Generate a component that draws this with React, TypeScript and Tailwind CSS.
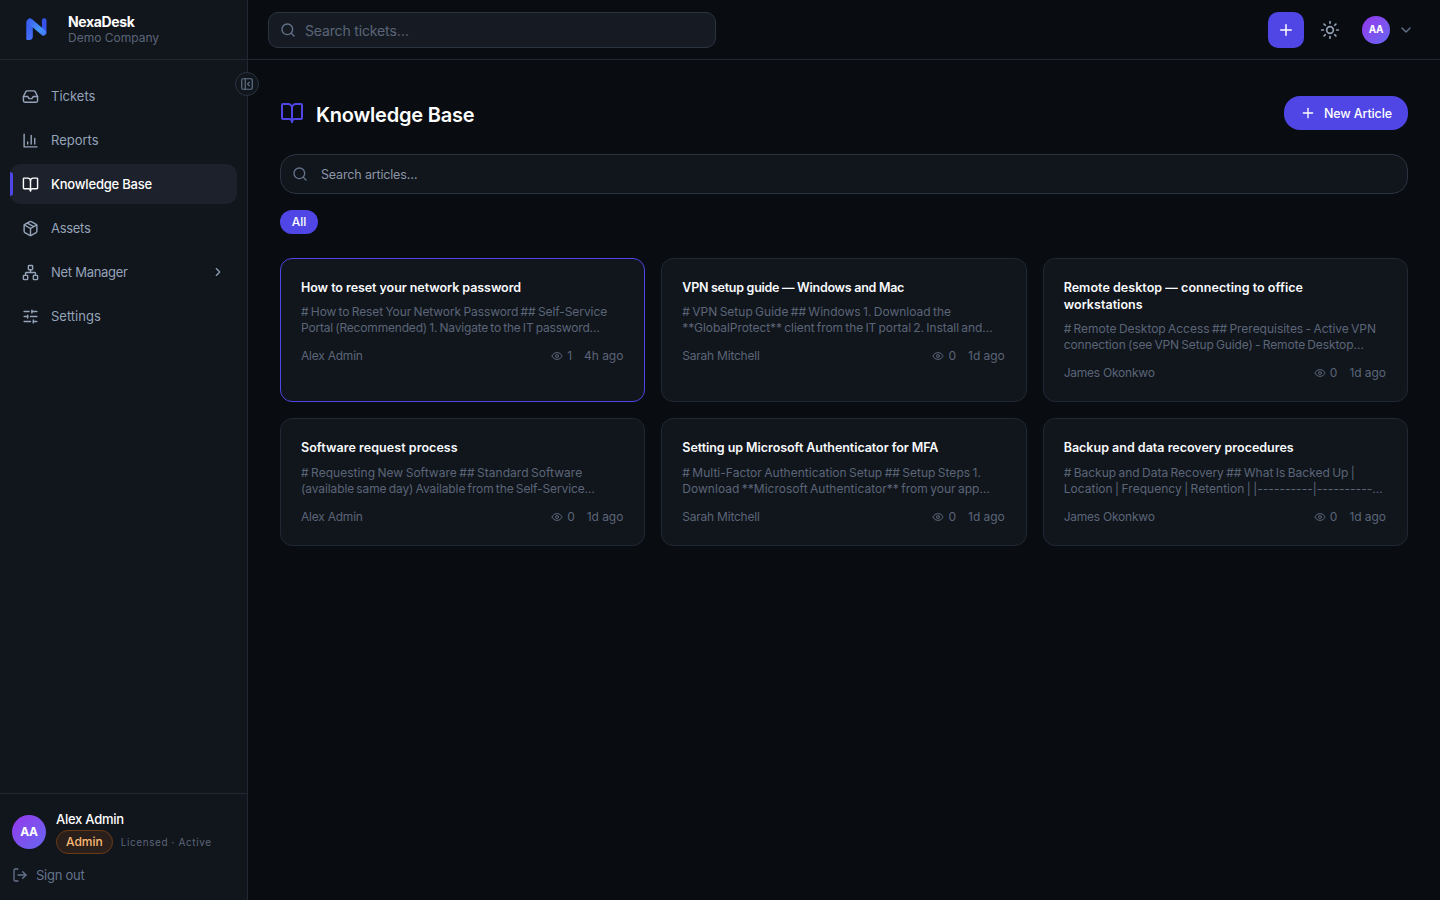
import { BookOpen, ChevronDown, ChevronRight, Eye, Inbox, LogOut, Network, Package, PanelLeftClose, Plus, Search, SlidersHorizontal, Sun } from 'lucide-react';
import type { ReactNode } from 'react';

function ReportsIcon() {
  return (
    <svg width="17" height="17" viewBox="0 0 24 24" fill="none" stroke="currentColor" strokeWidth="2" strokeLinecap="round" strokeLinejoin="round">
      <path d="M3 3v18h18" />
      <path d="M8 17v-3" />
      <path d="M13 17V5" />
      <path d="M18 17V9" />
    </svg>
  );
}

function Logo() {
  return (
    <svg width="22" height="24" viewBox="0 0 22 24" fill="none">
      <defs>
        <linearGradient id="stem" x1="0" y1="0" x2="0" y2="22" gradientUnits="userSpaceOnUse">
          <stop stopColor="#3457ea" />
          <stop offset="1" stopColor="#4470fb" />
        </linearGradient>
        <linearGradient id="slash" x1="2" y1="2" x2="18" y2="17" gradientUnits="userSpaceOnUse">
          <stop stopColor="#3a5cf0" />
          <stop offset="0.65" stopColor="#4596fb" />
          <stop offset="1" stopColor="#3f7df8" />
        </linearGradient>
      </defs>
      <path d="M18.2 2.5v12" stroke="#3553ea" strokeWidth="4.6" strokeLinecap="round" />
      <path d="M0.3 3.6A3.4 3.4 0 0 1 6.8 3.4V18.6A3.4 3.4 0 0 1 3.4 22H1.3A1 1 0 0 1 .3 21z" fill="url(#stem)" />
      <path d="M4 3.3L17.3 14.6" stroke="url(#slash)" strokeWidth="5.8" strokeLinecap="round" />
    </svg>
  );
}

function NavItem({ icon, label, tracking, active, chevron }: { icon: ReactNode; label: string; tracking: string; active?: boolean; chevron?: boolean }) {
  return (
    <a className={`relative flex h-10 items-center gap-3 rounded-[10px] px-3 text-[13px] ${active ? 'bg-[#1c212b] font-medium text-white' : 'text-[#94a3b8]'}`}>
      {active && <span className="absolute left-0 top-2 h-6 w-[3px] rounded-r-sm bg-[#4f46e5]" />}
      {icon}
      <span className={`pt-[2px] ${tracking}`}>{label}</span>
      {chevron && <ChevronRight size={14} className="ml-auto" />}
    </a>
  );
}

type Article = { title: ReactNode; lines: [string, string]; tracks: [string, string]; titleTrack: string; author: string; views: number; age: string; selected?: boolean };

const firstRow: Article[] = [
  { title: 'How to reset your network password', titleTrack: 'tracking-[-0.06px]', lines: ['# How to Reset Your Network Password ## Self-Service', 'Portal (Recommended) 1. Navigate to the IT password…'], tracks: ['tracking-[-0.08px]', 'tracking-[-0.18px]'], author: 'Alex Admin', views: 1, age: '4h ago', selected: true },
  { title: 'VPN setup guide — Windows and Mac', titleTrack: 'tracking-[-0.28px]', lines: ['# VPN Setup Guide ## Windows 1. Download the', '**GlobalProtect** client from the IT portal 2. Install and…'], tracks: ['', 'tracking-[-0.07px]'], author: 'Sarah Mitchell', views: 0, age: '1d ago' },
  { title: <>Remote desktop — connecting to office<br />workstations</>, titleTrack: 'tracking-[0.04px]', lines: ['# Remote Desktop Access ## Prerequisites - Active VPN', 'connection (see VPN Setup Guide) - Remote Desktop…'], tracks: ['tracking-[-0.02px]', 'tracking-[-0.12px]'], author: 'James Okonkwo', views: 0, age: '1d ago' },
];

const secondRow: Article[] = [
  { title: 'Software request process', titleTrack: 'tracking-[0.05px]', lines: ['# Requesting New Software ## Standard Software', '(available same day) Available from the Self-Service…'], tracks: ['tracking-[0.04px]', 'tracking-[-0.11px]'], author: 'Alex Admin', views: 0, age: '1d ago' },
  { title: 'Setting up Microsoft Authenticator for MFA', titleTrack: 'tracking-[-0.06px]', lines: ['# Multi-Factor Authentication Setup ## Setup Steps 1.', 'Download **Microsoft Authenticator** from your app…'], tracks: ['tracking-[0.02px]', 'tracking-[0.02px]'], author: 'Sarah Mitchell', views: 0, age: '1d ago' },
  { title: 'Backup and data recovery procedures', titleTrack: '', lines: ['# Backup and Data Recovery ## What Is Backed Up |', 'Location | Frequency | Retention | |----------|----------…'], tracks: ['', 'tracking-[0.03px]'], author: 'James Okonkwo', views: 0, age: '1d ago' },
];

function ArticleCard({ a, bodyGap }: { a: Article; bodyGap: string }) {
  return (
    <article className={`rounded-xl border bg-[#11151c] p-5 ${a.selected ? 'border-[#4f46e5]' : 'border-[#202834]'}`}>
      <h3 className={`whitespace-nowrap text-[12.5px] font-semibold leading-[17px] text-[#f8fafc] ${a.titleTrack}`}>{a.title}</h3>
      <p className={`whitespace-nowrap text-[12px] leading-4 text-[#5b6578] [word-spacing:-1px] ${bodyGap}`}>
        <span className={`block ${a.tracks[0]}`}>{a.lines[0]}</span>
        <span className={`block ${a.tracks[1]}`}>{a.lines[1]}</span>
      </p>
      <div className="mt-3 flex items-center justify-between text-[12px] leading-4 text-[#5b6578]">
        <span className="tracking-[-0.23px]">{a.author}</span>
        <span className="flex items-center gap-3 pr-px">
          <span className="flex items-center gap-1"><Eye size={12} />{a.views}</span>
          <span className="tracking-[-0.05px]">{a.age}</span>
        </span>
      </div>
    </article>
  );
}

export default function App() {
  return (
    <div className="flex h-[900px] w-[1440px] overflow-hidden bg-[#090c11] font-['Inter',sans-serif] text-white">
      <aside className="relative flex w-[248px] shrink-0 flex-col border-r border-[#202834] bg-[#11151c]">
        <div className="flex h-[60px] shrink-0 items-center border-b border-[#202834] pl-[26px]">
          <Logo />
          <div className="ml-5">
            <div className="text-[14px] font-bold leading-4 tracking-[-0.35px]">NexaDesk</div>
            <div className="text-[12px] leading-4 text-[#5b6578]">Demo Company</div>
          </div>
        </div>
        <button className="absolute -right-3 top-[72px] z-10 flex size-6 items-center justify-center rounded-full border border-[#2a3441] bg-[#11151c] text-[#64748b]">
          <PanelLeftClose size={14} />
        </button>
        <nav className="flex flex-1 flex-col gap-1 px-[10px] pt-4">
          <NavItem icon={<Inbox size={17} />} label="Tickets" tracking="" />
          <NavItem icon={<ReportsIcon />} label="Reports" tracking="" />
          <NavItem icon={<BookOpen size={17} />} label="Knowledge Base" tracking="tracking-[-0.2px]" active />
          <NavItem icon={<Package size={17} />} label="Assets" tracking="tracking-[-0.3px]" />
          <NavItem icon={<Network size={17} />} label="Net Manager" tracking="tracking-[-0.28px]" chevron />
          <NavItem icon={<SlidersHorizontal size={17} />} label="Settings" tracking="" />
        </nav>
        <div className="h-[107px] shrink-0 border-t border-[#202834] px-3 pt-4">
          <div className="flex items-center gap-[10px]">
            <div className="flex size-[34px] items-center justify-center rounded-full bg-linear-to-br from-[#9333ea] to-[#6366f1] text-[12px] font-bold tracking-[-0.4px]">AA</div>
            <div>
              <div className="mb-[2px] text-[13px] font-medium leading-[18px] tracking-[-0.25px]">Alex Admin</div>
              <div className="flex items-center gap-2">
                <span className="flex h-6 items-center rounded-full border border-[#6b3a17] bg-[#2a1f1b] px-[9px] text-[12px] font-medium text-[#fdba74]">Admin</span>
                <span className="text-[10px] tracking-[0.59px] text-[#5b6578]">Licensed · Active</span>
              </div>
            </div>
          </div>
          <div className="mt-[13px] flex items-center gap-2 text-[13px] leading-4 text-[#64748b]"><LogOut size={16} /><span className="tracking-[-0.27px]">Sign out</span></div>
        </div>
      </aside>
      <div className="flex flex-1 flex-col">
        <header className="flex h-[60px] shrink-0 items-center border-b border-[#202834] pl-5 pr-[26px]">
          <div className="flex h-9 w-[448px] items-center gap-[9px] rounded-[10px] border border-[#2a3441] bg-[#161b23] px-[11px] text-[14px] text-[#5b6578]">
            <Search size={16} className="text-[#64748b]" />
            <span className="pt-[2px] tracking-[-0.15px]">Search tickets…</span>
          </div>
          <button className="ml-auto flex size-9 items-center justify-center rounded-[10px] bg-[#4f46e5]"><Plus size={18} /></button>
          <Sun size={20} className="ml-4 text-[#94a3b8]" />
          <div className="ml-[22px] flex size-7 items-center justify-center rounded-full bg-linear-to-br from-[#9333ea] to-[#6366f1] text-[10px] font-bold tracking-[-0.2px]">AA</div>
          <ChevronDown size={16} className="ml-2 text-[#64748b]" />
        </header>
        <main className="flex-1 px-8 pt-9">
          <div className="flex h-[34px] items-center">
            <BookOpen size={24} className="text-[#4f46e5]" />
            <h1 className="ml-3 pt-[3px] text-[20px] font-semibold tracking-[-0.22px]">Knowledge Base</h1>
            <button className="ml-auto flex h-[34px] w-[124px] items-center gap-2 rounded-2xl bg-[#4f46e5] pl-4 text-[12.5px] font-medium"><Plus size={16} /><span className="whitespace-nowrap pt-[2px] tracking-[-0.13px]">New Article</span></button>
          </div>
          <div className="mt-6 flex h-10 items-center gap-[13px] rounded-2xl border border-[#2a3441] bg-[#11151c] px-[11px] text-[12.5px] text-[#8b95a5]">
            <Search size={16} className="text-[#64748b]" />
            <span className="pt-[2px] tracking-[-0.16px]">Search articles…</span>
          </div>
          <div className="mt-4 flex h-6 w-[38px] items-center justify-center rounded-full bg-[#4f46e5] text-[12px] font-medium">All</div>
          <section className="mt-6 grid grid-cols-3 gap-4">
            {firstRow.map((a, i) => <ArticleCard key={i} a={a} bodyGap="mt-2" />)}
            {secondRow.map((a, i) => <ArticleCard key={i} a={a} bodyGap="mt-[9px]" />)}
          </section>
        </main>
      </div>
    </div>
  );
}
